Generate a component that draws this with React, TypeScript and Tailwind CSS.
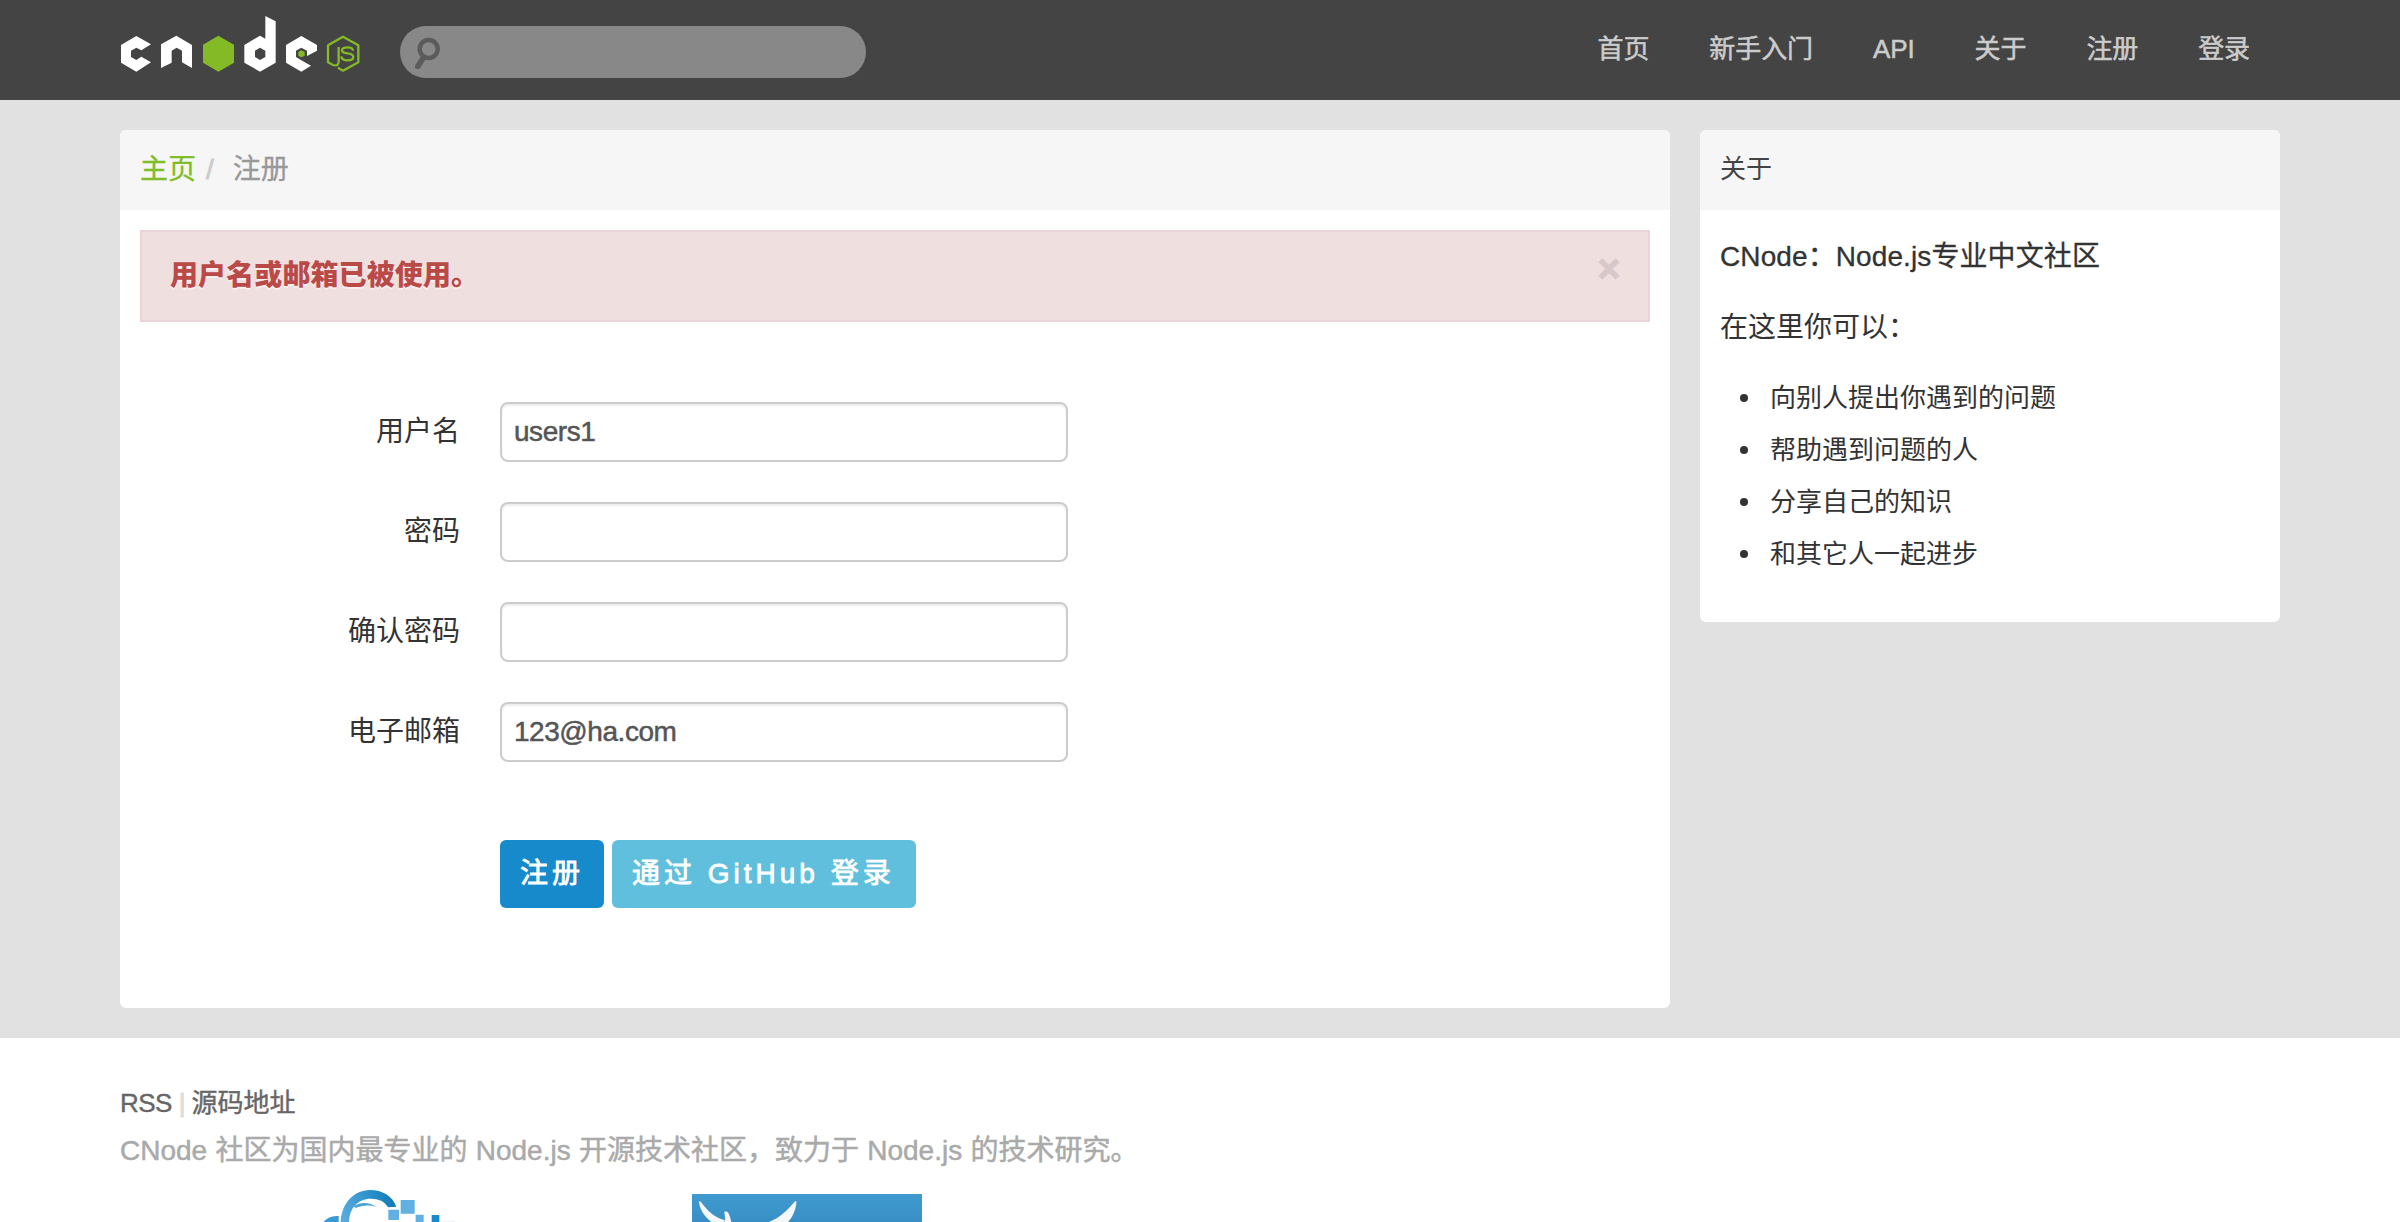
import React from "react";

function CnodeLogo() {
  return (
    <svg className="block h-[100px] w-[240px] shrink-0" viewBox="60 0 720 300" fill="#fff" aria-label="cnode js">
      <path d="M63 135L109 108L153 133L124 151L109 143L93 152V171L109 180L124 170L153 187L109 215L63 188Z" />
      <path d="M183 133L229 107L276 135V204L246 187V152L230 143L215 152V188L183 204Z" />
      <path d="M355 107L402 134V188L355 215L309 188V134Z" fill="#83ba26" />
      <path
        fillRule="evenodd"
        d="M433 135L480 107L496 116V48L527 64V188L480 215L433 188ZM480 143L465 152V171L480 180L496 171V152Z"
      />
      <path d="M558 135L604 108L651 135V152L621 168V152L604 143L588 152V171L604 181L633 197L604 215L558 188Z" />
      <path d="M604 151L614 156V167L604 172L595 167V156Z" fill="#83ba26" />
      <g fill="none" stroke="#83ba26" strokeWidth="7" strokeLinejoin="round">
        <path d="M714 203L729 212L775 187V136L729 110L684 136V187L699 195Q716 200 716 184V141" />
        <path d="M759 152Q758 142 743 142Q726 142 726 151Q726 159 742 160Q760 162 760 171Q760 181 743 181Q725 181 724 169" />
      </g>
    </svg>
  );
}

function SearchBox() {
  return (
    <div className="mt-1 ml-10 flex h-[52px] w-[466px] items-center rounded-full bg-[#888] pl-[14px]">
      <svg className="h-[34px] w-[28px]" viewBox="0 0 28 34" fill="none" stroke="#5b5b5b">
        <circle cx="14.7" cy="14" r="9" strokeWidth="4.4" />
        <path d="M9.5 22.5L3.8 31.5" strokeWidth="5.6" strokeLinecap="round" />
      </svg>
    </div>
  );
}

const navItems = ["首页", "新手入门", "API", "关于", "注册", "登录"];

function Header() {
  return (
    <header className="flex h-[100px] items-center bg-[#444] px-[120px]">
      <CnodeLogo />
      <SearchBox />
      <nav className="ml-auto flex h-[100px] text-[26px] leading-[98px] tracking-[-0.1px] text-[#ccc] [-webkit-text-stroke:0.5px]">
        {navItems.map((item) => (
          <a key={item} className="px-[30px]">
            {item}
          </a>
        ))}
      </nav>
    </header>
  );
}

const fields = [
  { label: "用户名", value: "users1", type: "text" },
  { label: "密码", value: "", type: "password" },
  { label: "确认密码", value: "", type: "password" },
  { label: "电子邮箱", value: "123@ha.com", type: "text" },
];

function RegisterPanel() {
  return (
    <main className="h-[878px] w-[1550px] overflow-hidden rounded-[6px] bg-white">
      <div className="flex h-20 bg-[#f6f6f6] px-5 leading-[80px] [-webkit-text-stroke:0.3px]">
        <a className="text-[#80bd26]">主页</a>
        <span className="px-[10px] text-[#ccc] [-webkit-text-stroke:0.8px]">/</span>
        <span className="ml-[9px] text-[#999]">注册</span>
      </div>
      <div className="px-5 pt-5">
        <div className="flex h-[92px] justify-between border-2 border-[#ebd3d8] bg-[#f0dfdf] pr-[28px] pl-7 font-bold leading-[88px]">
          <strong className="tracking-[0.1px] text-[#b94a48] [text-shadow:0_2px_0_rgba(255,255,255,0.5)]">用户名或邮箱已被使用。</strong>
          <span className="text-[38px] leading-[74px] text-[#d9c8ca] [-webkit-text-stroke:1.6px] [text-shadow:0_2px_0_rgba(255,255,255,0.3)]">×</span>
        </div>
        <form className="mt-20 flex flex-col gap-10">
          {fields.map((f) => (
            <label key={f.label} className="flex h-[60px]">
              <span className="mr-10 w-80 text-right leading-[60px] text-[#333]">{f.label}</span>
              <input
                type={f.type}
                defaultValue={f.value}
                className="h-[60px] w-[568px] rounded-[8px] border-2 border-[#ccc] bg-white px-3 text-[28px] leading-[40px] tracking-[-0.45px] text-[#555] shadow-[inset_0_2px_2px_rgba(0,0,0,0.075)] outline-none [-webkit-text-stroke:0.5px]"
              />
            </label>
          ))}
        </form>
        <div className="mt-[78px] ml-[360px] flex gap-2 leading-[68px] tracking-[4px] text-white [-webkit-text-stroke:0.8px]">
          <button className="h-[68px] w-[104px] rounded-[6px] bg-[#168acb] pl-5 text-left">注册</button>
          <button className="h-[68px] w-[304px] rounded-[6px] bg-[#60bfdc] pl-5 text-left whitespace-nowrap">通过 GitHub 登录</button>
        </div>
      </div>
    </main>
  );
}

const aboutItems = ["向别人提出你遇到的问题", "帮助遇到问题的人", "分享自己的知识", "和其它人一起进步"];

function AboutPanel() {
  return (
    <aside className="h-[492px] w-[580px] overflow-hidden rounded-[6px] bg-white text-[#333]">
      <div className="h-20 bg-[#f6f6f6] px-5 text-[26px] leading-[78px] text-[#444]">关于</div>
      <div className="px-5 pt-[27px]">
        <p className="leading-[40px] tracking-[0.1px] [-webkit-text-stroke:0.3px]">CNode：Node.js专业中文社区</p>
        <p className="mt-[31px] leading-[40px]">在这里你可以：</p>
        <ul className="mt-[24px] text-[26px] leading-[52px]">
          {aboutItems.map((item) => (
            <li key={item} className="flex items-center pl-5">
              <span className="mr-[22px] size-2 rounded-full bg-[#333]" />
              {item}
            </li>
          ))}
        </ul>
      </div>
    </aside>
  );
}

function CloudLogo() {
  return (
    <svg className="ml-[200px] block h-8 w-[140px]" viewBox="60 54 420 96">
      <defs>
        <linearGradient id="cloud" x1="122" x2="289" y1="120" y2="90" gradientUnits="userSpaceOnUse">
          <stop offset="0" stopColor="#5aacdf" />
          <stop offset="0.5" stopColor="#2f93cc" />
          <stop offset="1" stopColor="#0f78b5" />
        </linearGradient>
      </defs>
      <path fill="url(#cloud)" d="M122 150C124 96 160 54 210 54C246 54 278 72 289 104L264 106C254 88 236 80 212 80C174 80 148 108 147 150Z" />
      <path fill="#4ba2d6" d="M161 103C180 88 212 90 228 105C208 98 186 100 167 108Z" />
      <path fill="#3a9ad2" d="M70 150C82 136 98 130 116 132V150Z" />
      <path fill="#62b0e2" d="M302 84H344V125H302ZM265 113H297V144H265ZM347 128H371V150H347Z" />
      <path fill="#1a8ad0" d="M395 129H418V150H395Z" />
      <path fill="#e5eef4" d="M428 148H464V150H428Z" />
    </svg>
  );
}

function BullLogo() {
  return (
    <svg className="mt-1 ml-[232px] block h-7 w-[230px]" viewBox="66 66 690 84">
      <defs>
        <linearGradient id="sky" x1="0" x2="0" y1="0" y2="1">
          <stop offset="0" stopColor="#3f9ad0" />
          <stop offset="1" stopColor="#388fc5" />
        </linearGradient>
      </defs>
      <path fill="url(#sky)" d="M66 66H756V150H66Z" />
      <g fill="#f4f8fa" stroke="#2f7fb3" strokeOpacity="0.45" strokeWidth="2">
        <path d="M86 88Q89 85 93 89C112 116 136 137 165 144L166 153H128C104 138 88 112 86 88Z" />
        <path d="M162 120C168 115 175 118 178 128C182 138 184 146 185 153H163C167 141 164 130 162 120Z" />
        <path d="M380 88Q377 85 373 89C350 118 322 141 288 153H352C369 136 379 112 380 88Z" />
      </g>
    </svg>
  );
}

function Footer() {
  return (
    <footer className="h-[184px] overflow-hidden bg-white px-[120px] pt-[45px]">
      <div className="flex h-10 text-[26px] leading-[40px] text-[#666] [-webkit-text-stroke:0.4px]">
        <a className="tracking-[-0.6px]">RSS</a>
        <span className="mr-[6px] ml-[7px] text-[#ddd] [-webkit-text-stroke:1px]">|</span>
        <a>源码地址</a>
      </div>
      <p className="h-14 leading-[56px] text-[#aaa] [word-spacing:0.5px] [-webkit-text-stroke:0.5px]">CNode 社区为国内最专业的 Node.js 开源技术社区，致力于 Node.js 的技术研究。</p>
      <div className="mt-[11px] flex">
        <CloudLogo />
        <BullLogo />
      </div>
    </footer>
  );
}

export default function App() {
  return (
    <div className="h-[1222px] w-[2400px] overflow-hidden bg-[#e1e1e1] font-['Liberation_Sans','Noto_Sans_CJK_SC',sans-serif] text-[28px]">
      <Header />
      <div className="flex h-[938px] items-start gap-[30px] px-[120px] pt-[30px]">
        <RegisterPanel />
        <AboutPanel />
      </div>
      <Footer />
    </div>
  );
}
